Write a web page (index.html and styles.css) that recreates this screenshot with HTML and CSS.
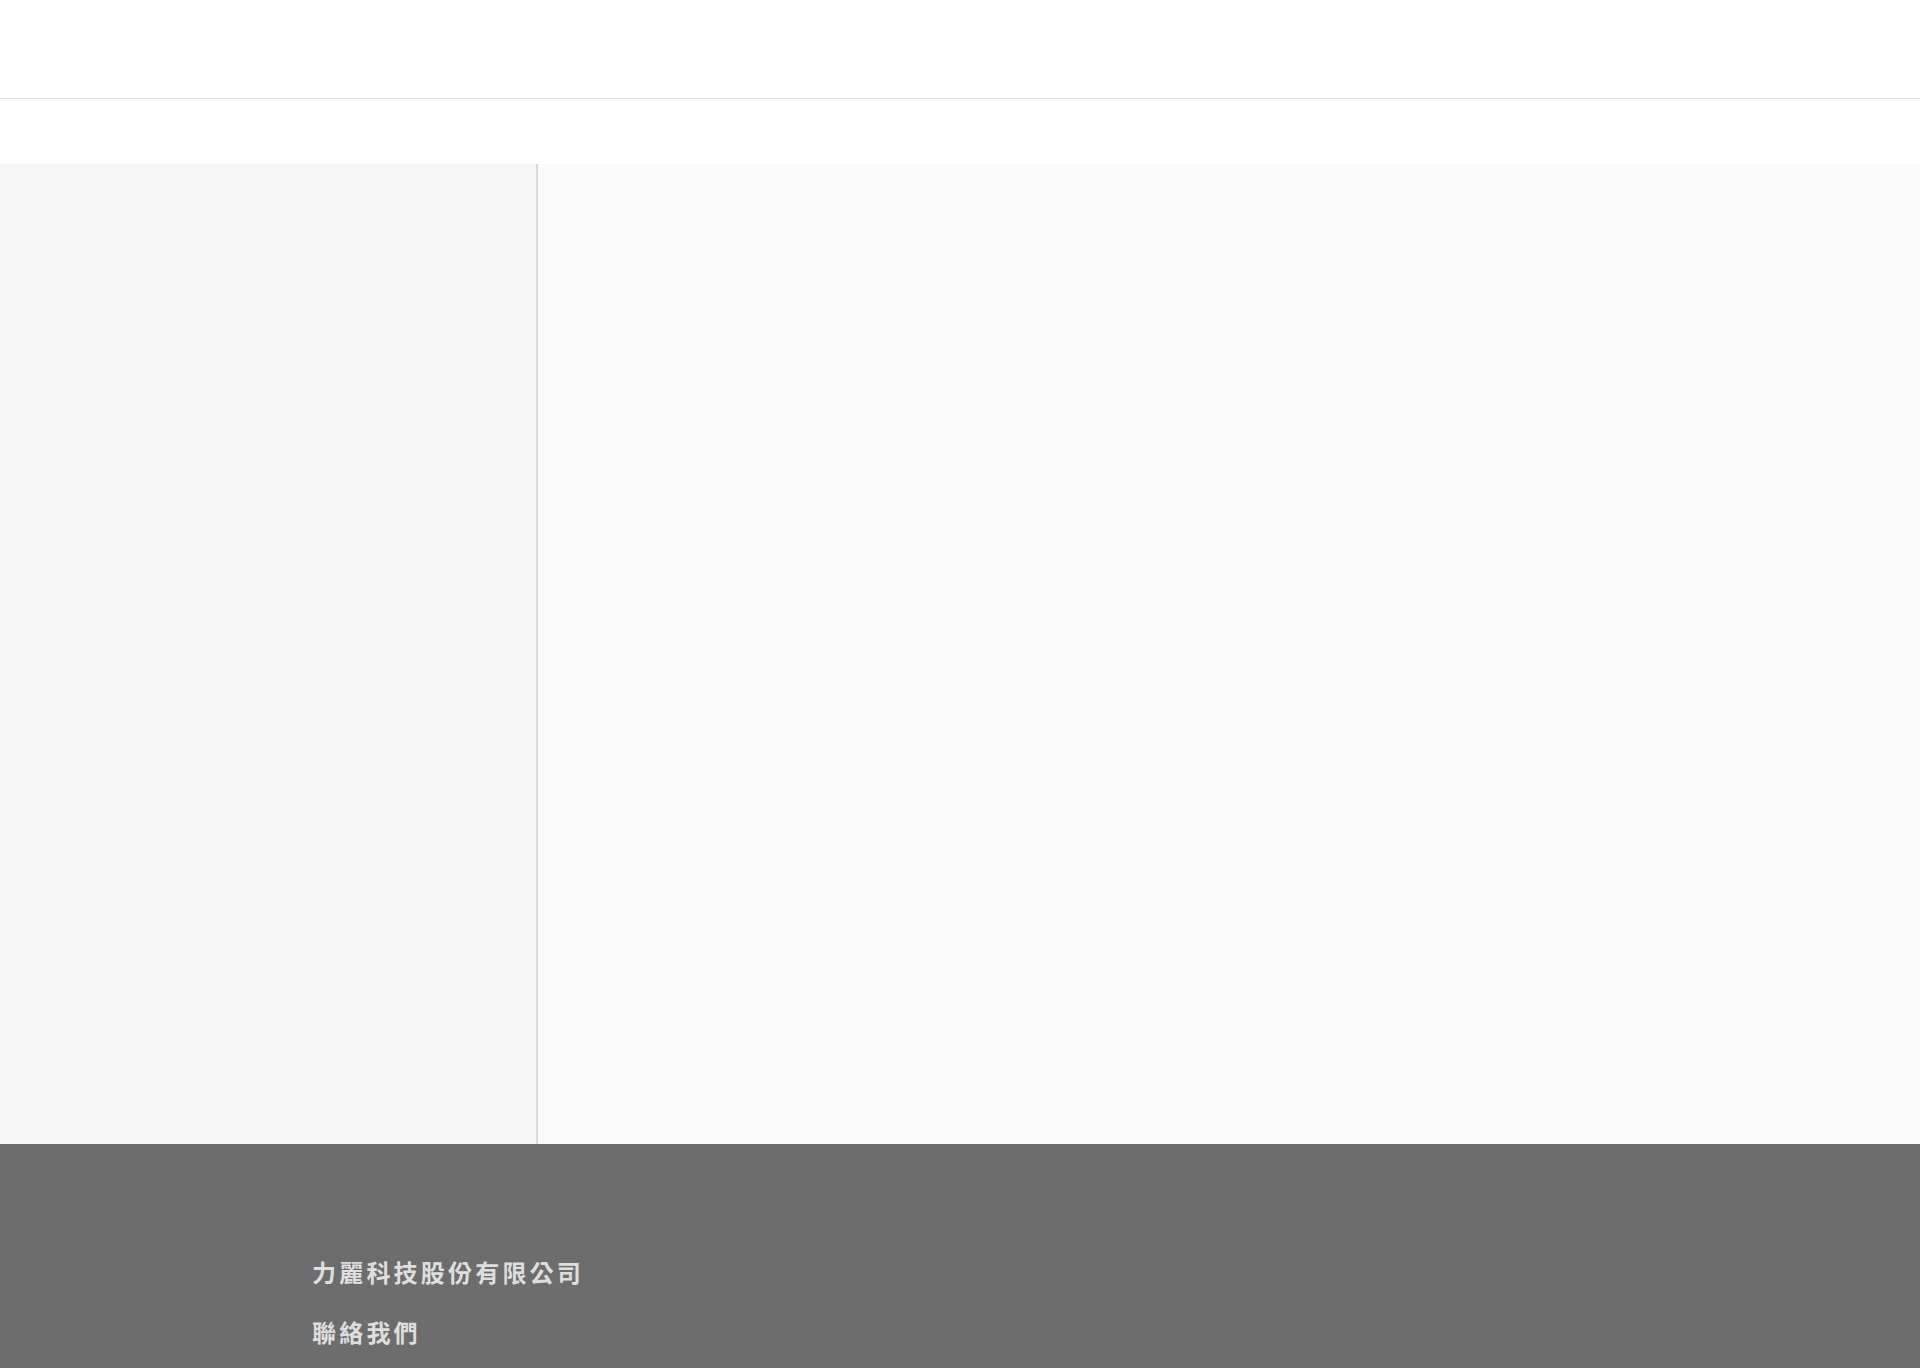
FILE: index.html
```html
<!DOCTYPE html>
<html lang="zh-Hant">
<head>
<meta charset="utf-8">
<title>力麗科技股份有限公司</title>
<link rel="stylesheet" href="styles.css">
</head>
<body>
<header class="site-header"></header>
<div class="subbar"></div>
<main class="content">
  <aside class="sidebar"></aside>
  <section class="main-area"></section>
</main>
<footer class="site-footer">
  <div class="container">
    <p class="footer-title">力麗科技股份有限公司</p>
    <p class="footer-link">聯絡我們</p>
  </div>
</footer>
</body>
</html>
```

FILE: styles.css
```css
* { box-sizing: border-box; }
html, body { margin: 0; padding: 0; }
body {
  font-family: "Noto Sans CJK TC", "Noto Sans", sans-serif;
  background: #6d6d6d;
  min-height: 1368px;
}
.site-header {
  height: 99px;
  background: #ffffff;
  border-bottom: 1px solid #dcdcdc;
}
.subbar {
  height: 65px;
  background: #ffffff;
}
.content {
  display: flex;
  height: 980px;
}
.sidebar {
  width: 538px;
  flex: none;
  background: #f6f6f6;
  border-right: 2px solid #dadada;
}
.main-area {
  flex: 1;
  background: #fafafa;
}
.site-footer {
  background: #6d6d6d;
  padding-top: 111px;
  height: 224px;
}
.container {
  width: 1296px;
  margin: 0 auto;
}
.footer-title, .footer-link {
  margin: 0;
  font-size: 24px;
  line-height: 33px;
  font-weight: 700;
  letter-spacing: 3.2px;
  color: #dedede;
}
.footer-link {
  margin-top: 27px;
}
```
